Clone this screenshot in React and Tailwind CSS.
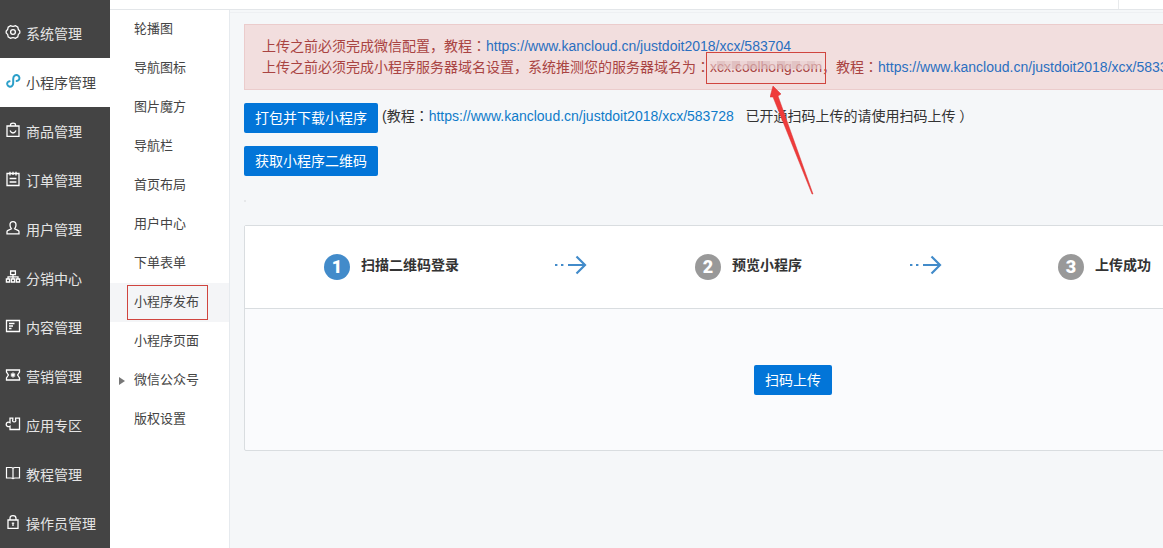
import clsx from 'clsx';

const iconProps = {
    viewBox: '1 1 14 14',
    fill: 'none',
    stroke: 'currentColor',
    strokeWidth: 1.3,
    className: 'size-3.5 shrink-0 overflow-visible',
    'aria-hidden': true,
};

function GearIcon() {
    return (
        <svg {...iconProps}>
            <path d="M5.5 1.7Q8 3 10.5 1.7L12.8 3.1Q12.8 5.8 14.8 7V9Q12.8 10.2 12.8 12.9L10.5 14.3Q8 13 5.5 14.3L3.2 12.9Q3.2 10.2 1.2 9V7Q3.2 5.8 3.2 3.1Z" />
            <circle cx="8" cy="8" r="2.4" />
        </svg>
    );
}

function MiniProgramIcon() {
    return (
        <svg {...iconProps} strokeWidth="2" strokeLinecap="round">
            <path d="M4.6 8.2C2.8 8.4 2 9.8 2.2 11.2C2.6 13.6 5.4 14.4 7 13C8 12.2 8.2 11.2 8.2 10V6C8.2 4.6 8.4 3.4 9.6 2.6C11.4 1.4 14 2.2 14.4 4.6C14.6 6.4 13.6 7.8 11.6 8" />
        </svg>
    );
}

function BagIcon() {
    return (
        <svg {...iconProps}>
            <path d="M2 4H14V14.4H2Z" />
            <path d="M5.5 4V2.8Q5.5 1.2 8 1.2T10.5 2.8V4" />
            <path d="M5 8.6Q6 11 8 11T11 8.6" />
        </svg>
    );
}

function OrderIcon() {
    return (
        <svg {...iconProps}>
            <path d="M2 2.5H14V14.5H2Z" />
            <path d="M5 0.8V4.5M8 0.8V4M11 0.8V4.5M4.6 7.5H11.4M4.6 11H11.4" />
        </svg>
    );
}

function UserIcon() {
    return (
        <svg {...iconProps}>
            <path d="M8 1.6C5.8 1.6 5 3.2 5 5C5 6.6 5.8 8 6.4 8.8L2.6 10.6Q2 11 2 11.8V13.8H14V11.8Q14 11 13.4 10.6L9.6 8.8C10.2 8 11 6.6 11 5C11 3.2 10.2 1.6 8 1.6Z" />
        </svg>
    );
}

function SitemapIcon() {
    return (
        <svg {...iconProps}>
            <path d="M5.6 2H10.4V5.6H5.6ZM1.4 10H4.6V13H1.4ZM6.4 10H9.6V13H6.4ZM11.4 10H14.6V13H11.4Z" />
            <path d="M8 5.6V10M3 10V7.8H13V10" />
        </svg>
    );
}

function ContentIcon() {
    return (
        <svg {...iconProps}>
            <path d="M1.5 2.5H14.5V13.5H1.5Z" />
            <path d="M4 5.5H9.5M4 8H8M4 10.5H6.5" />
        </svg>
    );
}

function TicketIcon() {
    return (
        <svg {...iconProps}>
            <path d="M1.5 3H14.5V5L12.6 8L14.5 11V13H1.5V11L3.4 8L1.5 5Z" />
            <path d="M8 5.5V10.5M5.8 6.8L10.2 9.2M10.2 6.8L5.8 9.2" />
        </svg>
    );
}

function PuzzleIcon() {
    return (
        <svg {...iconProps}>
            <path d="M5 2.2H7.8V3.6Q7 5.8 9.2 5.8T10.6 3.6V2.2H14.5V13.5H5V10.2Q3.6 11 2.4 10.4Q1.2 9.8 1.2 8.4T2.4 6.4Q3.6 5.8 5 6.6Z" />
        </svg>
    );
}

function BookIcon() {
    return (
        <svg {...iconProps} strokeWidth="1.2">
            <path d="M8 3.5Q7.4 2.5 6 2.5H1.5V13H6Q7.4 13 8 13.6Q8.6 13 10 13H14.5V2.5H10Q8.6 2.5 8 3.5V13.6" />
        </svg>
    );
}

function LockIcon() {
    return (
        <svg {...iconProps}>
            <path d="M3 6H13V14.4H3Z" />
            <path d="M5 6V4.4Q5 1.6 8 1.6T11 4.4V6M8 9.4V12" />
            <path d="M6.8 9.2H9.2" />
        </svg>
    );
}

const mainMenu = [
    { label: '系统管理', icon: GearIcon },
    { label: '小程序管理', icon: MiniProgramIcon, active: true },
    { label: '商品管理', icon: BagIcon },
    { label: '订单管理', icon: OrderIcon },
    { label: '用户管理', icon: UserIcon },
    { label: '分销中心', icon: SitemapIcon },
    { label: '内容管理', icon: ContentIcon },
    { label: '营销管理', icon: TicketIcon },
    { label: '应用专区', icon: PuzzleIcon },
    { label: '教程管理', icon: BookIcon },
    { label: '操作员管理', icon: LockIcon },
];

const subMenu = [
    { label: '轮播图' },
    { label: '导航图标' },
    { label: '图片魔方' },
    { label: '导航栏' },
    { label: '首页布局' },
    { label: '用户中心' },
    { label: '下单表单' },
    { label: '小程序发布', active: true },
    { label: '小程序页面' },
    { label: '微信公众号', children: true },
    { label: '版权设置' },
];

function Sidebar() {
    return (
        <nav className="w-[110px] shrink-0 bg-[#444] pt-[9px]">
            {mainMenu.map(({ label, icon: Icon, active }) => (
                <a
                    key={label}
                    href="#"
                    className={clsx(
                        'flex h-[49px] items-center gap-1.5 whitespace-nowrap pl-1.5 text-sm',
                        active ? 'bg-white text-[#444]' : 'text-[#e4e4e4]'
                    )}
                >
                    <span className={clsx('pb-[3px]', active ? 'text-[#2b9fc9]' : 'text-white')}>
                        <Icon />
                    </span>
                    <span>{label}</span>
                </a>
            ))}
        </nav>
    );
}

function SubMenu() {
    return (
        <nav className="w-[120px] shrink-0 border-r border-[#e6eaee] bg-white text-[13px] text-[#444]">
            {subMenu.map(({ label, active, children }) => (
                <a
                    key={label}
                    href="#"
                    className={clsx(
                        'relative flex h-[39px] items-center whitespace-nowrap pl-6',
                        active && 'bg-[#f4f5f7]'
                    )}
                >
                    {children && (
                        <svg viewBox="0 0 6 8" className="absolute left-[9px] h-2 w-1.5" aria-hidden="true">
                            <path d="M0 0L6 4L0 8Z" fill="#777" />
                        </svg>
                    )}
                    {label}
                    {active && (
                        <span className="absolute inset-y-0.5 left-[17px] w-[81px] border border-current text-[#d0453f]" />
                    )}
                </a>
            ))}
        </nav>
    );
}

// full-width colon, drawn in the middle of its box
function Colon() {
    return <span className="font-['Noto_Sans_CJK_JP'] leading-none">：</span>;
}

// hides the middle of the domain name behind a mosaic
const mosaic = [
    'bg-[#ecd3d4]/60', 'bg-[#dcb9ba]/70', 'bg-[#e6cacb]/70', 'bg-[#d9b4b5]/70', 'bg-[#e9d0d1]/70',
    'bg-[#dab7b8]/70', 'bg-[#e2c3c4]/70', 'bg-[#ddbcbd]/70', 'bg-[#ebd4d5]/70', 'bg-[#d9b4b5]/70',
    'bg-[#e6cacb]/70', 'bg-[#dcb9ba]/70', 'bg-[#e9d0d1]/70', 'bg-[#dfc0c1]/70', 'bg-[#ecd3d4]/60',
];

function DomainName() {
    return (
        <span className="relative inline-block">
            xcx.coolhong.com
            <span className="absolute inset-x-0 top-1 flex h-2">
                {mosaic.map((color, i) => (
                    <span key={i} className={clsx('flex-1', color)} />
                ))}
            </span>
            <span className="absolute -inset-x-1 -top-[5px] h-8 border border-current text-[#d0453f]" />
            <svg
                viewBox="0 0 44 110"
                className="absolute left-[60px] top-7 z-10 h-[110px] w-11"
                aria-hidden="true"
            >
                <path d="M3 1L11 9L8 11L43 109L42 109L3 12L0 12Z" fill="#ef3b3b" stroke="#d93535" strokeWidth="0.5" />
            </svg>
        </span>
    );
}

function Alert() {
    return (
        <div className="whitespace-nowrap border border-[#ebcccc] bg-[#f2dede] px-[17px] py-[11px] leading-[21px] text-[#a94442]">
            <p>
                上传之前必须完成微信配置，教程
                <Colon />
                <a href="#" className="text-[#2a6fc0]">https://www.kancloud.cn/justdoit2018/xcx/583704</a>
            </p>
            <p>
                上传之前必须完成小程序服务器域名设置，系统推测您的服务器域名为
                <Colon />
                <DomainName />
                ，教程
                <Colon />
                <a href="#" className="text-[#2a6fc0]">https://www.kancloud.cn/justdoit2018/xcx/583304</a>
            </p>
        </div>
    );
}

function Button({ children }) {
    return (
        <button type="button" className="h-[30px] whitespace-nowrap rounded-xs bg-[#0275d8] px-[11px] text-white">
            {children}
        </button>
    );
}

function Step({ number, label, active, className }) {
    return (
        <div className={clsx('flex items-center gap-[11px] whitespace-nowrap', className)}>
            <span
                className={clsx(
                    'flex size-[26px] items-center justify-center rounded-full font-[Roboto] text-lg font-black text-white',
                    active ? 'bg-[#428bca]' : 'bg-[#999]'
                )}
            >
                {number}
            </span>
            <span className="pb-1 font-bold text-[#333]">{label}</span>
        </div>
    );
}

function StepArrow({ className }) {
    return (
        <svg viewBox="0 0 32 20" className={clsx('h-5 w-8 shrink-0', className)} aria-hidden="true">
            <path d="M0 9H2.4V11H0ZM6 9H8.4V11H6Z" fill="#428bca" />
            <path d="M13 10H30M21.5 1.5L30 10L21.5 18.5" fill="none" stroke="#428bca" strokeWidth="2.2" />
        </svg>
    );
}

function PublishCard() {
    return (
        <section className="rounded-xs border border-[#d9dde0] bg-[#fafbfd]">
            <div className="flex h-[83px] items-center border-b border-[#d9dde0] bg-white pl-[79px]">
                <Step number="1" label="扫描二维码登录" active />
                <StepArrow className="mb-1 ml-24" />
                <Step number="2" label="预览小程序" className="ml-27" />
                <StepArrow className="mb-1 ml-27" />
                <Step number="3" label="上传成功" className="ml-29" />
            </div>
            <div className="flex h-[141px] items-center justify-center">
                <Button>扫码上传</Button>
            </div>
        </section>
    );
}

function App() {
    return (
        <div
            className="flex min-h-screen overflow-hidden bg-[#f5f7f9] text-sm text-[#333]"
            style={{ fontFamily: '"Liberation Sans", "Noto Sans CJK SC", sans-serif' }}
        >
            <Sidebar />
            <div className="flex min-w-0 flex-1 flex-col">
                <header className="flex h-2.5 justify-end border-b border-[#e3e6e9] bg-white">
                    <div className="w-[45px] border-l border-[#e8eaec]" />
                </header>
                <div className="flex flex-1">
                    <SubMenu />
                    <main className="min-w-0 flex-1 overflow-hidden">
                        <div className="h-[3px] border-b border-[#eef0f3]" />
                        {/* wider than small windows, the rest is cut off */}
                        <div className="min-w-[1112px] pl-3.5 pt-[11px]">
                            <Alert />
                            <div className="mt-[13px] flex items-start gap-1">
                                <Button>打包并下载小程序</Button>
                                <p className="whitespace-pre leading-[26px]">
                                    (教程
                                    <Colon />
                                    <a href="#" className="text-[#0f7bc9]">https://www.kancloud.cn/justdoit2018/xcx/583728</a>
                                    {'   已开通扫码上传的请使用扫码上传 ）'}
                                </p>
                            </div>
                            <div className="mt-[13px]">
                                <Button>获取小程序二维码</Button>
                            </div>
                            <div className="mt-6 mb-[23px] size-0.5 bg-[#e6e8ea]" />
                            <PublishCard />
                        </div>
                    </main>
                </div>
            </div>
        </div>
    );
}

export default App;
